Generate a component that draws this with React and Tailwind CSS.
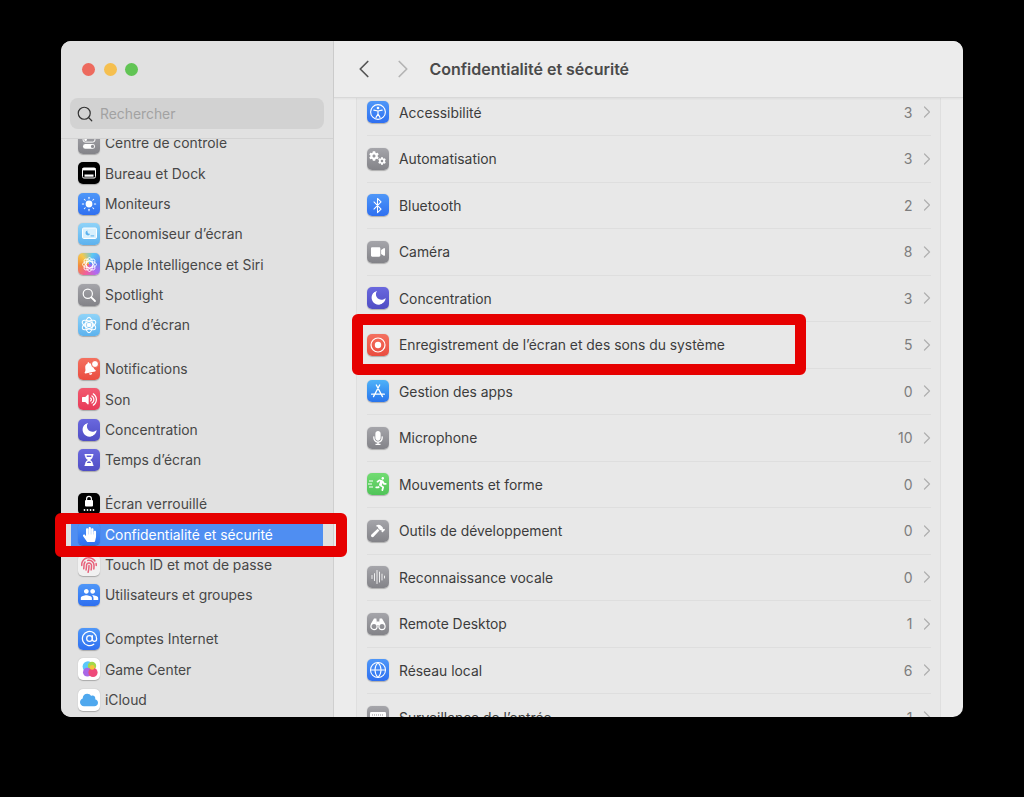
import React from "react";
import { ChevronLeft, ChevronRight, Search, AtSign, Bluetooth, Globe } from "lucide-react";
import {
  FaHandPaper,
  FaVideo,
  FaMoon,
  FaMicrophone,
  FaHammer,
  FaRunning,
  FaHourglassHalf,
  FaBell,
  FaVolumeUp,
  FaCloud,
  FaFingerprint,
  FaCog,
} from "react-icons/fa";
import { MdPeople } from "react-icons/md";

const blue = "bg-gradient-to-b from-[#4f97f8] to-[#2f6ff0]";
const gray = "bg-gradient-to-b from-[#a5a5aa] to-[#838388]";
const indigo = "bg-gradient-to-b from-[#6a68de] to-[#4f4dc4]";
const sky = "bg-gradient-to-b from-[#8fd3f8] to-[#5cb2ee]";

function Sun() {
  const rays = [0, 45, 90, 135, 180, 225, 270, 315];
  return (
    <svg width="16" height="16" viewBox="0 0 16 16" fill="white">
      <circle cx="8" cy="8" r="3.4" />
      {rays.map((r) => (
        <rect key={r} x="7.5" y="0.8" width="1" height="2.4" rx="0.5" transform={`rotate(${r} 8 8)`} />
      ))}
    </svg>
  );
}

function Toggles() {
  return (
    <svg width="16" height="16" viewBox="0 0 16 16">
      <rect x="2" y="2.5" width="12" height="4.6" rx="2.3" fill="none" stroke="white" strokeWidth="1" />
      <circle cx="4.6" cy="4.8" r="1.3" fill="white" />
      <rect x="2" y="9" width="12" height="4.8" rx="2.4" fill="white" />
      <circle cx="11.5" cy="11.4" r="1.6" fill="#8e8e93" />
    </svg>
  );
}

function Dock() {
  return (
    <svg width="16" height="16" viewBox="0 0 16 16">
      <rect x="1.5" y="3" width="13" height="10" rx="1.4" fill="none" stroke="white" strokeWidth="1" />
      <rect x="1.5" y="3" width="13" height="2.4" fill="white" />
      <rect x="3.5" y="9.5" width="9" height="2.2" fill="white" />
    </svg>
  );
}

function Saver() {
  return (
    <svg width="17" height="17" viewBox="0 0 17 17">
      <rect x="1.5" y="3" width="14" height="10.5" rx="1.2" fill="#d8f0fd" stroke="white" strokeWidth="1" />
      <path d="M6.5 5.6a2.4 2.4 0 1 0 2.6 3.2a2.4 2.4 0 0 1-2.6-3.2z" fill="#5cb2ee" />
      <rect x="9.6" y="10.4" width="3.6" height="1" fill="#5cb2ee" />
    </svg>
  );
}

function SiriFlower() {
  const petals = [0, 45, 90, 135];
  return (
    <svg width="17" height="17" viewBox="0 0 17 17" fill="none" stroke="white" strokeWidth="0.9">
      {petals.map((r) => (
        <ellipse key={r} cx="8.5" cy="8.5" rx="3.2" ry="7" transform={`rotate(${r} 8.5 8.5)`} />
      ))}
    </svg>
  );
}

function Flower() {
  const petals = [0, 60, 120];
  return (
    <svg width="18" height="18" viewBox="0 0 18 18" fill="none" stroke="white" strokeWidth="1.1">
      {petals.map((r) => (
        <ellipse key={r} cx="9" cy="9" rx="3.4" ry="7.6" transform={`rotate(${r} 9 9)`} />
      ))}
      <circle cx="9" cy="9" r="1.8" fill="white" />
    </svg>
  );
}

function Loupe() {
  return (
    <svg width="16" height="16" viewBox="0 0 16 16" fill="none" stroke="white" strokeLinecap="round">
      <circle cx="6.8" cy="6.8" r="4.6" strokeWidth="1.2" />
      <path d="M10.3 10.3L14 14" strokeWidth="1.8" />
    </svg>
  );
}

function Record() {
  return (
    <svg width="18" height="18" viewBox="0 0 18 18">
      <circle cx="9" cy="9" r="7" fill="none" stroke="white" strokeWidth="1.2" />
      <circle cx="9" cy="9" r="3.2" fill="white" />
    </svg>
  );
}

function Wave() {
  const bars = [
    [2.5, 7, 4],
    [5, 5, 8],
    [7.5, 2, 14],
    [10, 3.5, 11],
    [12.5, 5.5, 7],
    [15, 7.5, 3],
  ];
  return (
    <svg width="18" height="18" viewBox="0 0 18 18" fill="white" opacity="0.85">
      {bars.map(([x, y, h]) => (
        <rect key={x} x={x} y={y} width="1" height={h} rx="0.5" />
      ))}
    </svg>
  );
}

function GameCenter() {
  return (
    <svg width="19" height="19" viewBox="0 0 19 19">
      <circle cx="8" cy="6.6" r="5.4" fill="#5ac8fa" />
      <circle cx="12" cy="6" r="4.2" fill="#a4d84a" />
      <circle cx="7.4" cy="12.2" r="4.4" fill="#a968e6" />
      <circle cx="13" cy="12.4" r="4.6" fill="#ee4a7a" />
      <circle cx="12.2" cy="7.4" r="2.4" fill="#f6c33c" />
    </svg>
  );
}

function Person() {
  return (
    <svg width="18" height="18" viewBox="0 0 18 18" fill="none" stroke="white">
      <circle cx="9" cy="9" r="7.4" strokeWidth="1.1" />
      <circle cx="9" cy="5" r="1.3" fill="white" stroke="none" />
      <path d="M4.8 7.2L9 8l4.2-.8M9 8v3M9 11l-2 3.4M9 11l2 3.4" strokeWidth="1.2" strokeLinecap="round" />
    </svg>
  );
}

function Gears() {
  return (
    <span className="flex items-center">
      <FaCog size={10} className="-mt-[5px]" />
      <FaCog size={8} className="mt-[5px] -ml-[1px]" />
    </span>
  );
}

function AppA() {
  return (
    <svg width="18" height="18" viewBox="0 0 18 18" fill="none" stroke="white" strokeWidth="1.3" strokeLinecap="round">
      <path d="M7.3 3l6.2 11.6M10.7 3L4.5 14.6M2.6 12.2h12.8" />
    </svg>
  );
}

function Binoculars() {
  return (
    <svg width="18" height="18" viewBox="0 0 18 18">
      <path d="M5 3.5h2.4L8 9H1.8zM10.6 3.5H13L16.2 9H10z" fill="white" />
      <rect x="7.6" y="6.5" width="2.8" height="3.5" fill="white" />
      <circle cx="5" cy="11.5" r="3.1" fill="none" stroke="white" strokeWidth="1.2" />
      <circle cx="13" cy="11.5" r="3.1" fill="none" stroke="white" strokeWidth="1.2" />
    </svg>
  );
}

function Keyboard() {
  return (
    <svg width="18" height="18" viewBox="0 0 18 18">
      <rect x="1" y="4" width="16" height="10" rx="1.2" fill="white" />
      <path d="M3 7h12M3 9.5h12" stroke="#8e8e93" strokeWidth="1" strokeDasharray="1 1" />
    </svg>
  );
}

function LockDots() {
  return (
    <svg width="18" height="20" viewBox="0 0 18 20" fill="white">
      <path d="M6.6 6V4.8a2.4 2.4 0 0 1 4.8 0V6" fill="none" stroke="white" strokeWidth="1.2" />
      <rect x="5" y="6" width="8" height="6.4" rx="1" />
      <circle cx="4.5" cy="16" r="0.9" />
      <circle cx="7.5" cy="16" r="0.9" />
      <circle cx="10.5" cy="16" r="0.9" />
      <circle cx="13.5" cy="16" r="0.9" />
    </svg>
  );
}

function BellDot() {
  return (
    <span className="relative flex">
      <FaBell size={13} className="-rotate-[12deg]" />
      <span className="absolute -top-[2px] -right-[3px] w-[6px] h-[6px] rounded-full bg-white border border-[#f0604f] box-content" />
    </span>
  );
}

function Runner() {
  return (
    <span className="flex items-center">
      <svg width="6" height="12" viewBox="0 0 6 12" stroke="white" strokeWidth="1">
        <path d="M1 3h4M0 6h4M1 9h4" />
      </svg>
      <FaRunning size={14} />
    </span>
  );
}

function AppIcon({ bg, children }) {
  return (
    <span className={`w-[22px] h-[22px] shrink-0 rounded-[5px] flex items-center justify-center text-white shadow-[0_0.5px_1px_rgba(0,0,0,0.25)] ${bg}`}>
      {children}
    </span>
  );
}

const sidebarGroups = [
  [
    ["Centre de contrôle", gray, <Toggles />],
    ["Bureau et Dock", "bg-black", <Dock />],
    ["Moniteurs", blue, <Sun />],
    ["Économiseur d’écran", sky, <Saver />],
    ["Apple Intelligence et Siri", "bg-[conic-gradient(from_200deg,#f0609a,#f08a3c,#f6c84a,#5cc8f4,#5f8cf4,#b06af0,#f0609a)]", <SiriFlower />],
    ["Spotlight", gray, <Loupe />],
    ["Fond d’écran", sky, <Flower />],
  ],
  [
    ["Notifications", "bg-gradient-to-b from-[#f4705f] to-[#ea4c3f]", <BellDot />],
    ["Son", "bg-gradient-to-b from-[#f2596f] to-[#e83a58]", <FaVolumeUp size={15} />],
    ["Concentration", indigo, <FaMoon size={14} className="-rotate-[30deg]" />],
    ["Temps d’écran", indigo, <FaHourglassHalf size={12} />],
  ],
  [
    ["Écran verrouillé", "bg-black", <LockDots />],
    ["Confidentialité et sécurité", blue, <FaHandPaper size={15} />, true],
    ["Touch ID et mot de passe", "bg-[#f1f1f1]", <FaFingerprint size={16} className="text-[#e8607a]" />],
    ["Utilisateurs et groupes", blue, <MdPeople size={19} />],
  ],
  [
    ["Comptes Internet", blue, <AtSign size={17} strokeWidth={1.8} />],
    ["Game Center", "bg-white", <GameCenter />],
    ["iCloud", "bg-white", <FaCloud size={18} className="text-[#4fa8ee]" />],
  ],
];

const rows = [
  ["Accessibilité", blue, <Person />, 3],
  ["Automatisation", gray, <Gears />, 3],
  ["Bluetooth", blue, <Bluetooth size={17} strokeWidth={1.5} />, 2],
  ["Caméra", gray, <FaVideo size={14} />, 8],
  ["Concentration", indigo, <FaMoon size={14} className="-rotate-[30deg]" />, 3],
  ["Enregistrement de l’écran et des sons du système", "bg-gradient-to-b from-[#f4705f] to-[#ea4c3f]", <Record />, 5],
  ["Gestion des apps", "bg-gradient-to-b from-[#4fb2f8] to-[#2a74ec]", <AppA />, 0],
  ["Microphone", gray, <FaMicrophone size={14} />, 10],
  ["Mouvements et forme", "bg-gradient-to-b from-[#72dc72] to-[#4fc458]", <Runner />, 0],
  ["Outils de développement", gray, <FaHammer size={14} />, 0],
  ["Reconnaissance vocale", gray, <Wave />, 0],
  ["Remote Desktop", gray, <Binoculars />, 1],
  ["Réseau local", blue, <Globe size={18} strokeWidth={1.4} />, 6],
  ["Surveillance de l’entrée", gray, <Keyboard />, 1],
];

function SidebarRow({ label, bg, icon, selected }) {
  return (
    <div className={`h-[30.33px] mx-[10px] pl-[7px] flex items-center gap-[5px] text-[13.87px] ${selected ? "bg-[#4f8ef2] text-white" : "text-[#474747]"}`}>
      <AppIcon bg={bg}>{icon}</AppIcon>
      <span className="pt-[2px]">{label}</span>
    </div>
  );
}

function Row({ label, bg, icon, count, last }) {
  return (
    <div className="h-[46.5px] flex items-center pl-[9.5px] pr-[9.5px]">
      <div className={`flex-1 h-full flex items-center ${last ? "" : "border-b border-[#dedede]"}`}>
        <AppIcon bg={bg}>{icon}</AppIcon>
        <span className="ml-[10.5px] pt-[2px] flex-1 text-[13.87px] text-[#3c3c3c]">{label}</span>
        <span className="text-[14px] text-[#7d7d7d]">{count}</span>
        <ChevronRight size={20} strokeWidth={1.5} className="ml-[4px] -mr-[6px] text-[#b0b0b0]" />
      </div>
    </div>
  );
}

export default function App() {
  return (
    <div className="relative h-[797px] bg-black pt-[41px] pl-[61px] [font-family:Inter,sans-serif]">
      <div className="w-[902px] h-[676px] rounded-[10px] overflow-hidden flex bg-[#ececec]">
        {/* sidebar */}
        <aside className="w-[273px] shrink-0 bg-[#e1e1e1] border-r border-[#cfcfcf] flex flex-col">
          <div className="h-[98px] shrink-0 border-b border-[#d3d3d3]">
            <div className="h-[57px] pl-[21px] flex items-center gap-[8.5px]">
              <span className="w-[13px] h-[13px] rounded-full bg-[#ed6a5e]" />
              <span className="w-[13px] h-[13px] rounded-full bg-[#f5bf4f]" />
              <span className="w-[13px] h-[13px] rounded-full bg-[#61c454]" />
            </div>
            <div className="mx-[9px] h-[31px] rounded-[8px] bg-[#d2d2d2] flex items-center pl-[6px] gap-[6px]">
              <Search size={18} strokeWidth={1.6} className="text-[#333333]" />
              <span className="pt-[2px] text-[13.87px] text-[#a2a2a2]">Rechercher</span>
            </div>
          </div>
          <div className="flex-1 overflow-hidden">
            <div className="-mt-[11.3px] flex flex-col gap-[13.7px]">
              {sidebarGroups.map((group, i) => (
                <div key={i}>
                  {group.map(([label, bg, icon, selected]) => (
                    <SidebarRow key={label} label={label} bg={bg} icon={icon} selected={selected} />
                  ))}
                </div>
              ))}
            </div>
          </div>
        </aside>

        {/* main panel */}
        <main className="flex-1 min-w-0 flex flex-col">
          <header className="h-[57px] shrink-0 border-b border-[#d8d8d8] shadow-[0_1px_2px_rgba(0,0,0,0.05)] flex items-center pl-[14.7px] relative z-10 bg-[#ececec]">
            <ChevronLeft size={30} strokeWidth={1.4} className="text-[#555555]" />
            <ChevronRight size={30} strokeWidth={1.4} className="ml-[9px] text-[#b4b4b4]" />
            <h1 className="ml-[11.8px] text-[16px] font-semibold text-[#4a4a4a]">Confidentialité et sécurité</h1>
          </header>
          <div className="flex-1 overflow-hidden px-[22px]">
            <div className="-mt-[8.5px] bg-[#e8e8e8] border-x border-[#dfdfdf]">
              {rows.map(([label, bg, icon, count], i) => (
                <Row key={label} label={label} bg={bg} icon={icon} count={count} last={i === rows.length - 1} />
              ))}
            </div>
          </div>
        </main>
      </div>

      {/* red annotations */}
      <div className="absolute left-[55px] top-[513px] w-[292px] h-[44px] border-[11px] border-[#e60000] rounded-[6px]" />
      <div className="absolute left-[352px] top-[314px] w-[454px] h-[61px] border-[11px] border-[#e60000] rounded-[6px]" />
    </div>
  );
}
